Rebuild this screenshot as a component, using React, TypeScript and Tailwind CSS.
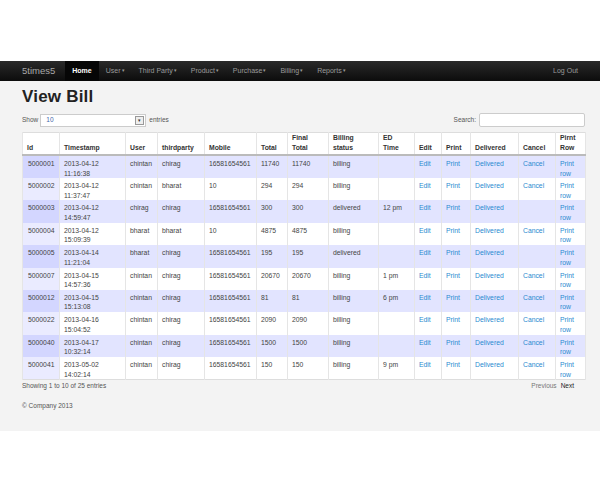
import React from "react";

const nav = ["User", "Third Party", "Product", "Purchase", "Billing", "Reports"];

const rows = [
  ["5000001", "2013-04-12", "11:16:38", "chintan", "chirag", "16581654561", "11740", "11740", "billing", "", true],
  ["5000002", "2013-04-12", "11:37:47", "chintan", "bharat", "10", "294", "294", "billing", "", true],
  ["5000003", "2013-04-12", "14:59:47", "chirag", "chirag", "16581654561", "300", "300", "delivered", "12 pm", false],
  ["5000004", "2013-04-12", "15:09:39", "bharat", "bharat", "10", "4875", "4875", "billing", "", true],
  ["5000005", "2013-04-14", "11:21:04", "bharat", "chirag", "16581654561", "195", "195", "delivered", "", false],
  ["5000007", "2013-04-15", "14:57:36", "chintan", "chirag", "16581654561", "20670", "20670", "billing", "1 pm", true],
  ["5000012", "2013-04-15", "15:13:08", "chintan", "chirag", "16581654561", "81", "81", "billing", "6 pm", true],
  ["5000022", "2013-04-16", "15:04:52", "chintan", "chirag", "16581654561", "2090", "2090", "billing", "", true],
  ["5000040", "2013-04-17", "10:32:14", "chintan", "chirag", "16581654561", "1500", "1500", "billing", "", true],
  ["5000041", "2013-05-02", "14:02:14", "chintan", "chirag", "16581654561", "150", "150", "billing", "9 pm", true],
] as const;

const heads: [React.ReactNode, number][] = [
  ["Id", 37],
  ["Timestamp", 66],
  ["User", 32],
  ["thirdparty", 47],
  ["Mobile", 52],
  ["Total", 31],
  [<>Final<br />Total</>, 41],
  [<>Billing<br />status</>, 50],
  [<>ED<br />Time</>, 36],
  ["Edit", 27],
  ["Print", 29],
  ["Delivered", 48],
  ["Cancel", 37],
  [<>Pirnt<br />Row</>, 30],
];

const link = "text-[#2a8bd0]";

export default function App() {
  return (
    <div className="w-[600px] h-[500px] bg-white font-['Liberation_Sans',Arial,sans-serif] text-[#333]">
      <div className="h-[61px]" />
      {/* Navbar */}
      <div className="h-[20px] bg-gradient-to-b from-[#2a2a2a] to-[#0c0c0c] flex items-stretch pl-[22px] pr-[22px]">
        <div className="text-[9.5px] text-[#a8a8a8] flex items-center mr-[10px]">5times5</div>
        <div className="bg-[#060606] text-white font-bold text-[7px] flex items-center px-[7px]">Home</div>
        {nav.map((n) => (
          <div key={n} className="text-[7px] text-[#9a9a9a] flex items-center px-[7px]">
            {n}
            <span className="ml-[1px] text-[5px]">▾</span>
          </div>
        ))}
        <div className="ml-auto text-[7px] text-[#9a9a9a] flex items-center">Log Out</div>
      </div>
      {/* Content */}
      <div className="bg-[#f3f3f3] h-[350px] px-[22px] pt-[6px]">
        <h1 className="text-[17px] font-bold text-[#222] leading-[20px] tracking-[0.2px]">View Bill</h1>
        <div className="w-[563px] flex items-center justify-between mt-[5px] h-[16px]">
          <div className="flex items-center text-[6.5px] text-[#555]">
            <span className="mr-[2px]">Show</span>
            <div className="w-[106px] h-[13px] bg-white border border-[#ccc] flex items-center justify-between pl-[5px] pr-[1px]">
              <span className="text-[6.5px] text-[#4466aa]">10</span>
              <span className="w-[9px] h-[9px] border border-[#999] bg-[#eee] flex items-center justify-center text-[5px] leading-none text-[#333]">▾</span>
            </div>
            <span className="ml-[3px]">entries</span>
          </div>
          <div className="flex items-center text-[6.5px] text-[#555]">
            <span className="mr-[3px]">Search:</span>
            <div className="w-[106px] h-[14px] bg-white border border-[#ccc] rounded-[2px]" />
          </div>
        </div>
        <table className="mt-[4px] w-[563px] table-fixed border-collapse border border-[#ddd] text-[6.8px] leading-[9.5px]">
          <colgroup>
            {heads.map(([, w], i) => (
              <col key={i} style={{ width: w }} />
            ))}
          </colgroup>
          <thead>
            <tr className="bg-white">
              {heads.map(([h], i) => (
                <th key={i} className="h-[21px] align-bottom text-left font-bold text-[#333] px-[4px] pb-[2px] border-x border-[#e5e5e5] border-b-2 border-b-[#bbb]">
                  {h}
                </th>
              ))}
            </tr>
          </thead>
          <tbody>
            {rows.map((r, i) => {
              const odd = i % 2 === 0;
              const td = "h-[22.4px] align-top px-[4px] pt-[3px] border-x border-[#e5e5e5] " + (odd ? "bg-[#e2e4ff]" : "bg-white");
              return (
                <tr key={r[0]} className="text-[#444]">
                  <td className={"h-[22.4px] align-top px-[5px] pt-[3px] border-x border-[#e5e5e5] " + (odd ? "bg-[#d3d6ff]" : "bg-[#eaebff]")}>{r[0]}</td>
                  <td className={td}>
                    {r[1]}
                    <br />
                    {r[2]}
                  </td>
                  <td className={td}>{r[3]}</td>
                  <td className={td}>{r[4]}</td>
                  <td className={td}>{r[5]}</td>
                  <td className={td}>{r[6]}</td>
                  <td className={td}>{r[7]}</td>
                  <td className={td}>{r[8]}</td>
                  <td className={td}>{r[9]}</td>
                  <td className={td + " " + link}>Edit</td>
                  <td className={td + " " + link}>Print</td>
                  <td className={td + " " + link}>Delivered</td>
                  <td className={td + " " + link}>{r[10] ? "Cancel" : ""}</td>
                  <td className={td + " " + link}>
                    Print
                    <br />
                    row
                  </td>
                </tr>
              );
            })}
          </tbody>
        </table>
        <div className="w-[563px] flex justify-between text-[6.5px] mt-[1px] leading-[10px]">
          <span className="text-[#555]">Showing 1 to 10 of 25 entries</span>
          <span className="pr-[11px]">
            <span className="text-[#777]">Previous</span>
            <span className="ml-[4px] text-[#222]">Next</span>
          </span>
        </div>
        <div className="text-[6.5px] text-[#555] mt-[10px]">© Company 2013</div>
      </div>
    </div>
  );
}
